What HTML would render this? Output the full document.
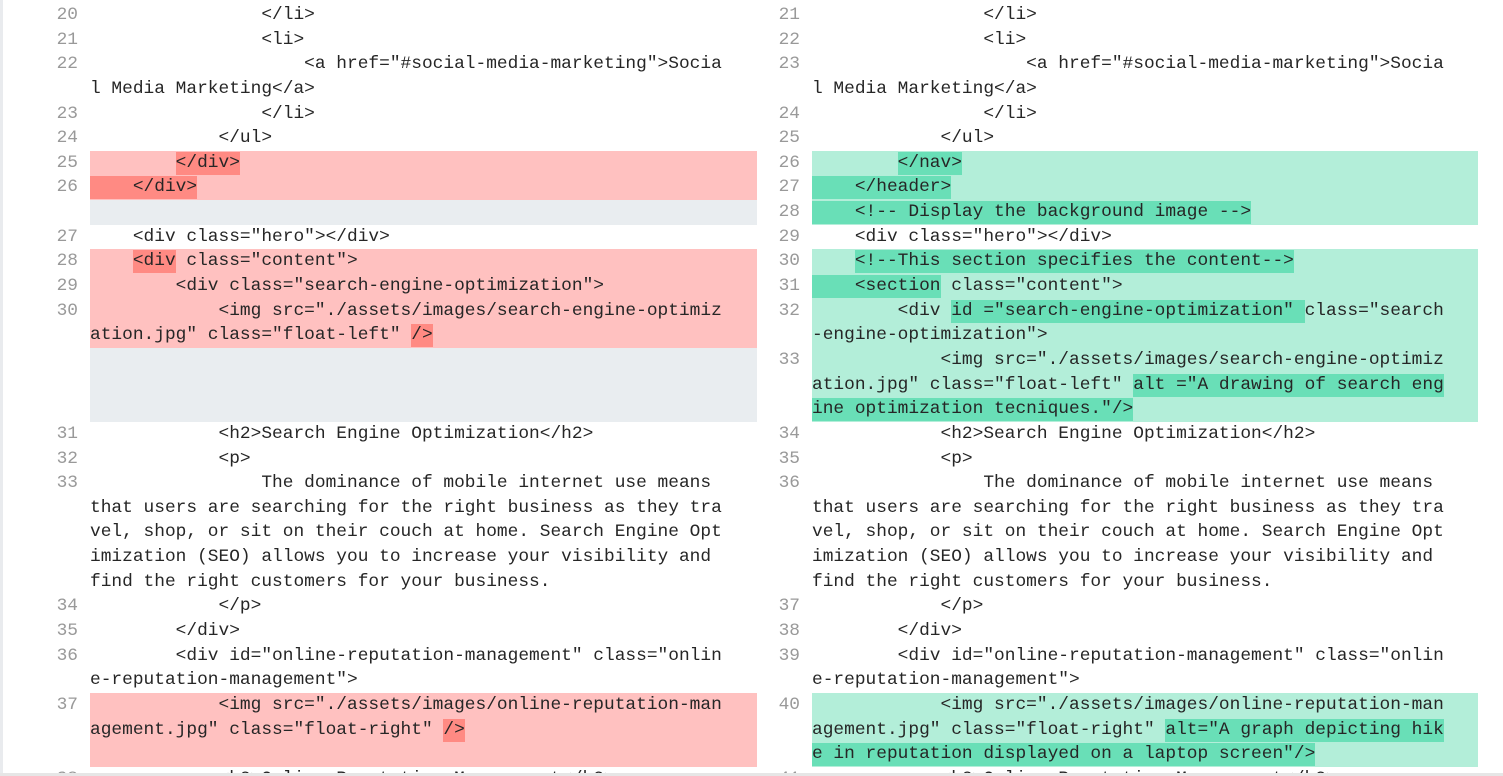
<!DOCTYPE html>
<html style="overflow:hidden;height:776px"><head><meta charset="utf-8"><style>
body{margin:0;width:1503px;height:776px;overflow:hidden;background:#fff;position:relative;font-family:"Liberation Mono",monospace;font-size:17.85px;color:#262626}
.g{position:absolute;left:0;top:0;width:3px;height:776px;background:#e9ebee}
.p{position:absolute;top:3px}
.r{position:relative;height:24.65px;line-height:24.65px;white-space:pre}
.n{position:absolute;width:40px;text-align:right;color:#999}
.c{position:absolute;top:0;height:24.65px}
.L .n{left:38px}.L .c{left:90px;width:667px}
.R .n{left:760px}.R .c{left:812px;width:666px}
.d .c{background:#ffc1c0}.a .c{background:#b3eed9}.e .c{background:#e9edf0}
.d i{background:#ff8a83}.a i{background:#69dfb7}
i{font-style:normal;display:inline-block;height:23px;line-height:23px;vertical-align:top;margin-top:1px}
.bt{position:absolute;left:0;top:773px;width:1503px;height:3px;background:#e6e6e6}
</style></head><body>
<div class="g"></div>
<div class="p L">
<div class="r"><span class="n">20</span><span class="c">                &lt;/li&gt;</span></div>
<div class="r"><span class="n">21</span><span class="c">                &lt;li&gt;</span></div>
<div class="r"><span class="n">22</span><span class="c">                    &lt;a href="#social-media-marketing"&gt;Socia</span></div>
<div class="r"><span class="c">l Media Marketing&lt;/a&gt;</span></div>
<div class="r"><span class="n">23</span><span class="c">                &lt;/li&gt;</span></div>
<div class="r"><span class="n">24</span><span class="c">            &lt;/ul&gt;</span></div>
<div class="r d"><span class="n">25</span><span class="c">        <i>&lt;/div&gt;</i></span></div>
<div class="r d"><span class="n">26</span><span class="c"><i>    &lt;/div&gt;</i></span></div>
<div class="r e"><span class="c"></span></div>
<div class="r"><span class="n">27</span><span class="c">    &lt;div class="hero"&gt;&lt;/div&gt;</span></div>
<div class="r d"><span class="n">28</span><span class="c">    <i>&lt;div</i> class="content"&gt;</span></div>
<div class="r d"><span class="n">29</span><span class="c">        &lt;div class="search-engine-optimization"&gt;</span></div>
<div class="r d"><span class="n">30</span><span class="c">            &lt;img src="./assets/images/search-engine-optimiz</span></div>
<div class="r d"><span class="c">ation.jpg" class="float-left" <i>/&gt;</i></span></div>
<div class="r e"><span class="c"></span></div>
<div class="r e"><span class="c"></span></div>
<div class="r e"><span class="c"></span></div>
<div class="r"><span class="n">31</span><span class="c">            &lt;h2&gt;Search Engine Optimization&lt;/h2&gt;</span></div>
<div class="r"><span class="n">32</span><span class="c">            &lt;p&gt;</span></div>
<div class="r"><span class="n">33</span><span class="c">                The dominance of mobile internet use means</span></div>
<div class="r"><span class="c">that users are searching for the right business as they tra</span></div>
<div class="r"><span class="c">vel, shop, or sit on their couch at home. Search Engine Opt</span></div>
<div class="r"><span class="c">imization (SEO) allows you to increase your visibility and</span></div>
<div class="r"><span class="c">find the right customers for your business.</span></div>
<div class="r"><span class="n">34</span><span class="c">            &lt;/p&gt;</span></div>
<div class="r"><span class="n">35</span><span class="c">        &lt;/div&gt;</span></div>
<div class="r"><span class="n">36</span><span class="c">        &lt;div id="online-reputation-management" class="onlin</span></div>
<div class="r"><span class="c">e-reputation-management"&gt;</span></div>
<div class="r d"><span class="n">37</span><span class="c">            &lt;img src="./assets/images/online-reputation-man</span></div>
<div class="r d"><span class="c">agement.jpg" class="float-right" <i>/&gt;</i></span></div>
<div class="r d"><span class="c"></span></div>
<div class="r"><span class="n">38</span><span class="c">            &lt;h2&gt;Online Reputation Management&lt;/h2&gt;</span></div>
</div>
<div class="p R">
<div class="r"><span class="n">21</span><span class="c">                &lt;/li&gt;</span></div>
<div class="r"><span class="n">22</span><span class="c">                &lt;li&gt;</span></div>
<div class="r"><span class="n">23</span><span class="c">                    &lt;a href="#social-media-marketing"&gt;Socia</span></div>
<div class="r"><span class="c">l Media Marketing&lt;/a&gt;</span></div>
<div class="r"><span class="n">24</span><span class="c">                &lt;/li&gt;</span></div>
<div class="r"><span class="n">25</span><span class="c">            &lt;/ul&gt;</span></div>
<div class="r a"><span class="n">26</span><span class="c">        <i>&lt;/nav&gt;</i></span></div>
<div class="r a"><span class="n">27</span><span class="c"><i>    &lt;/header&gt;</i></span></div>
<div class="r a"><span class="n">28</span><span class="c"><i>    &lt;!-- Display the background image --&gt;</i></span></div>
<div class="r"><span class="n">29</span><span class="c">    &lt;div class="hero"&gt;&lt;/div&gt;</span></div>
<div class="r a"><span class="n">30</span><span class="c">    <i>&lt;!--This section specifies the content--&gt;</i></span></div>
<div class="r a"><span class="n">31</span><span class="c"><i>    &lt;section</i> class="content"&gt;</span></div>
<div class="r a"><span class="n">32</span><span class="c">        &lt;div <i>id ="search-engine-optimization" </i>class="search</span></div>
<div class="r a"><span class="c">-engine-optimization"&gt;</span></div>
<div class="r a"><span class="n">33</span><span class="c">            &lt;img src="./assets/images/search-engine-optimiz</span></div>
<div class="r a"><span class="c">ation.jpg" class="float-left" <i>alt ="A drawing of search eng</i></span></div>
<div class="r a"><span class="c"><i>ine optimization tecniques."/&gt;</i></span></div>
<div class="r"><span class="n">34</span><span class="c">            &lt;h2&gt;Search Engine Optimization&lt;/h2&gt;</span></div>
<div class="r"><span class="n">35</span><span class="c">            &lt;p&gt;</span></div>
<div class="r"><span class="n">36</span><span class="c">                The dominance of mobile internet use means</span></div>
<div class="r"><span class="c">that users are searching for the right business as they tra</span></div>
<div class="r"><span class="c">vel, shop, or sit on their couch at home. Search Engine Opt</span></div>
<div class="r"><span class="c">imization (SEO) allows you to increase your visibility and</span></div>
<div class="r"><span class="c">find the right customers for your business.</span></div>
<div class="r"><span class="n">37</span><span class="c">            &lt;/p&gt;</span></div>
<div class="r"><span class="n">38</span><span class="c">        &lt;/div&gt;</span></div>
<div class="r"><span class="n">39</span><span class="c">        &lt;div id="online-reputation-management" class="onlin</span></div>
<div class="r"><span class="c">e-reputation-management"&gt;</span></div>
<div class="r a"><span class="n">40</span><span class="c">            &lt;img src="./assets/images/online-reputation-man</span></div>
<div class="r a"><span class="c">agement.jpg" class="float-right" <i>alt="A graph depicting hik</i></span></div>
<div class="r a"><span class="c"><i>e in reputation displayed on a laptop screen"/&gt;</i></span></div>
<div class="r"><span class="n">41</span><span class="c">            &lt;h2&gt;Online Reputation Management&lt;/h2&gt;</span></div>
</div>
<div class="bt"></div>
</body></html>
